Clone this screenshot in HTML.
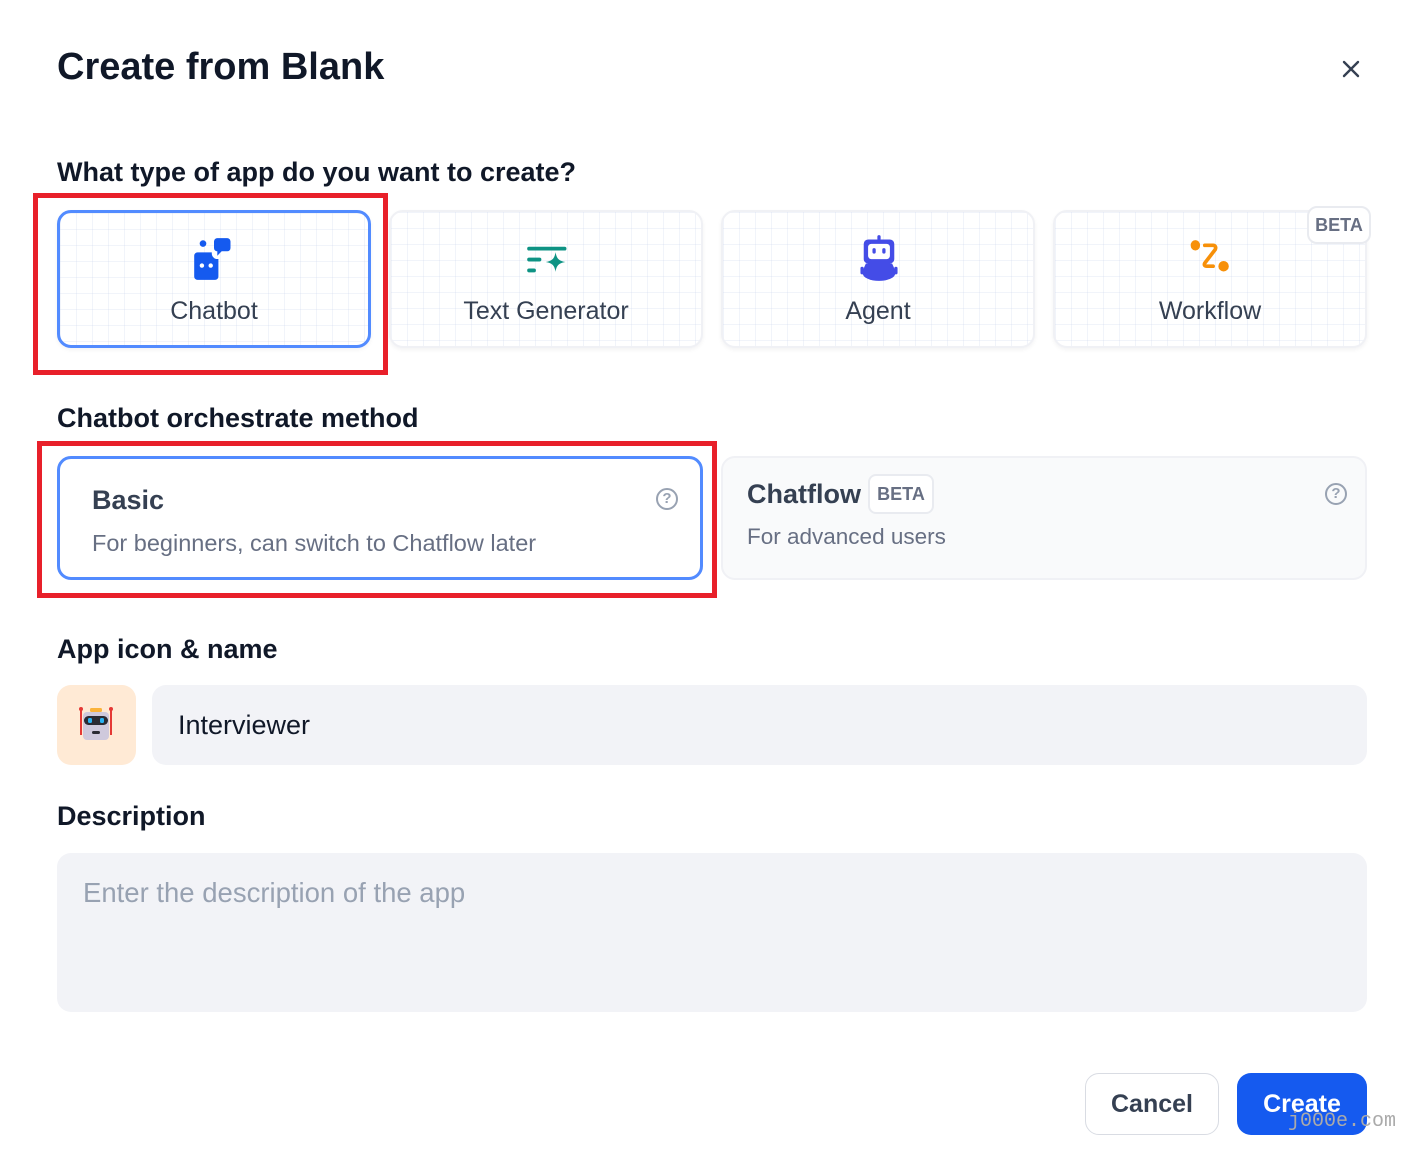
<!DOCTYPE html>
<html><head><meta charset="utf-8"><style>
*{box-sizing:border-box;margin:0;padding:0}
body{width:1415px;height:1153px;background:#fff;font-family:"Liberation Sans","Noto Sans CJK SC",sans-serif;position:relative;overflow:hidden;color:#101828}
.a{position:absolute}
h1{position:absolute;left:57px;top:46px;font-size:38px;font-weight:600;color:#101828}
.lbl{position:absolute;left:57px;font-size:27px;font-weight:600;color:#101828}
.card{position:absolute;top:210px;width:314px;height:138px;border-radius:14px;border:2px solid #f0f1f5;box-shadow:0 2px 4px rgba(16,24,40,.05);
background-color:#fff;background-image:linear-gradient(rgba(200,210,235,.25) 1px,transparent 1px),linear-gradient(90deg,rgba(200,210,235,.25) 1px,transparent 1px);background-size:16px 16px}
.card .t{position:absolute;left:0;right:0;top:85px;text-align:center;font-size:25px;color:#354052}
.card svg{position:absolute;left:135px;top:26px}
.red{position:absolute;border:5px solid #e8202a}
.beta{border:2px solid #e9ebf0;border-radius:8px;background:#fff;color:#676f83;font-weight:600;font-size:18px;text-align:center}
.q{position:absolute;width:22px;height:22px;border:2px solid #98a2b2;border-radius:50%;color:#98a2b2;font-size:15px;text-align:center;line-height:18px;font-weight:600}
</style></head><body>
<h1>Create from Blank</h1>
<svg class="a" style="left:1341px;top:59px" width="20" height="20" viewBox="0 0 20 20"><path d="M3 3L17 17M17 3L3 17" stroke="#354052" stroke-width="2.4" stroke-linecap="round"/></svg>

<div class="lbl" style="top:157px">What type of app do you want to create?</div>

<div class="card" style="left:57px;border-color:#528bff;border-width:3px">
<svg width="44" height="44" viewBox="0 0 40 40" style="left:132px;top:24px"><circle cx="10" cy="6" r="3" fill="#155aef"/><path d="M20 1h12a3 3 0 0 1 3 3v6a3 3 0 0 1-3 3h-5l-4 4v-4a3 3 0 0 1-3-3V4a3 3 0 0 1 3-3z" fill="#155aef"/><path d="M5 14h13v1a5 5 0 0 0 4 5l2 0v16a3 3 0 0 1-3 3H5a3 3 0 0 1-3-3V17a3 3 0 0 1 3-3z" fill="#155aef"/><circle cx="9" cy="26" r="2" fill="#fff"/><circle cx="17" cy="26" r="2" fill="#fff"/></svg>
<div class="t" style="top:84px">Chatbot</div></div>
<div class="card" style="left:389px">
<svg width="48" height="44" viewBox="0 0 44 40" style="left:134px;top:28px"><rect x="2" y="6" width="36" height="3.5" rx="1.7" fill="#0e9384"/><rect x="2" y="16" width="13" height="3.5" rx="1.7" fill="#0e9384"/><rect x="2" y="26" width="8" height="3.5" rx="1.7" fill="#0e9384"/><path d="M28 11c1 6 3 8 9 9-6 1-8 3-9 9-1-6-3-8-9-9 6-1 8-3 9-9z" fill="#0e9384"/></svg>
<div class="t">Text Generator</div></div>
<div class="card" style="left:721px">
<svg width="44" height="48" viewBox="0 0 40 44" style="left:134px;top:22px"><rect x="18.5" y="1" width="3" height="5" rx="1.5" fill="#444ce7"/><rect x="6" y="5" width="28" height="22" rx="4" fill="#444ce7"/><rect x="10" y="9" width="20" height="14" rx="3" fill="#fff"/><rect x="14" y="13" width="3" height="5" rx="1.5" fill="#444ce7"/><rect x="23" y="13" width="3" height="5" rx="1.5" fill="#444ce7"/><path d="M8 27h24c2 4 3 7 3 9a15 7 0 0 1-30 0c0-2 1-5 3-9z" fill="#444ce7"/><rect x="3" y="30" width="3" height="7" rx="1.5" fill="#444ce7"/><rect x="34" y="30" width="3" height="7" rx="1.5" fill="#444ce7"/></svg>
<div class="t">Agent</div></div>
<div class="card" style="left:1053px">
<svg width="46" height="44" viewBox="0 0 44 42" style="left:132px;top:27px"><ellipse cx="8" cy="6" rx="4.5" ry="5" fill="#f79009"/><path d="M17 6h8c2 0 3 2 2 4l-10 13c-1 2 0 3 2 3h6" stroke="#f79009" stroke-width="3.5" fill="none" stroke-linecap="round" stroke-linejoin="round"/><ellipse cx="35" cy="26" rx="5" ry="5" fill="#f79009"/></svg>
<div class="t">Workflow</div></div>
<div class="beta a" style="left:1307px;top:206px;width:64px;height:38px;line-height:34px;border-radius:10px">BETA</div>
<div class="red" style="left:33px;top:193px;width:355px;height:182px"></div>

<div class="lbl" style="top:403px">Chatbot orchestrate method</div>
<div class="a" style="left:57px;top:456px;width:646px;height:124px;border:3px solid #528bff;border-radius:14px;background:#fff">
<div class="a" style="left:32px;top:26px;font-size:27px;font-weight:600;color:#354052">Basic</div>
<div class="a" style="left:32px;top:71px;font-size:23.5px;color:#676f83">For beginners, can switch to Chatflow later</div>
<div class="q" style="left:596px;top:29px">?</div></div>
<div class="red" style="left:37px;top:441px;width:680px;height:157px"></div>
<div class="a" style="left:721px;top:456px;width:646px;height:124px;border:2px solid #f0f1f5;border-radius:14px;background:#f9fafb">
<div class="a" style="left:24px;top:21px;font-size:27px;font-weight:600;color:#354052">Chatflow</div>
<div class="beta a" style="left:145px;top:16px;width:66px;height:40px;line-height:36px">BETA</div>
<div class="q" style="left:602px;top:25px">?</div>
<div class="a" style="left:24px;top:66px;font-size:22.5px;color:#676f83">For advanced users</div></div>

<div class="lbl" style="top:634px">App icon &amp; name</div>
<div class="a" style="left:57px;top:685px;width:79px;height:80px;border-radius:14px;background:#ffead5">
<svg width="40" height="40" viewBox="0 0 40 40" style="position:absolute;left:19px;top:20px"><rect x="14" y="3" width="12" height="4" rx="1.5" fill="#fbb33a"/><line x1="5" y1="5" x2="5" y2="30" stroke="#e53935" stroke-width="2"/><line x1="35" y1="5" x2="35" y2="30" stroke="#e53935" stroke-width="2"/><circle cx="5" cy="4" r="2" fill="#e53935"/><circle cx="35" cy="4" r="2" fill="#e53935"/><rect x="7" y="7" width="26" height="28" rx="4" fill="#cfc9dc"/><rect x="8" y="11" width="24" height="9" rx="4.5" fill="#2b2b33"/><rect x="12" y="13" width="4" height="5" rx="1.5" fill="#2ab2f2"/><rect x="24" y="13" width="4" height="5" rx="1.5" fill="#2ab2f2"/><rect x="16" y="26" width="8" height="3" rx="1.5" fill="#2b2b33"/></svg></div>
<div class="a" style="left:152px;top:685px;width:1215px;height:80px;border-radius:14px;background:#f2f3f7;font-size:27px;color:#101828;padding:25px 26px">Interviewer</div>

<div class="lbl" style="top:801px">Description</div>
<div class="a" style="left:57px;top:853px;width:1310px;height:159px;border-radius:14px;background:#f2f3f7;font-size:27.5px;color:#98a2b2;padding:24px 26px">Enter the description of the app</div>

<div class="a" style="left:1085px;top:1073px;width:134px;height:62px;border:1.5px solid #d9dce3;border-radius:14px;background:#fff;font-size:25px;font-weight:600;color:#354052;text-align:center;line-height:60px">Cancel</div>
<div class="a" style="left:1237px;top:1073px;width:130px;height:62px;border-radius:14px;background:#155aef;font-size:25px;font-weight:600;color:#fff;text-align:center;line-height:62px">Create</div>
<div class="a" style="left:1288px;top:1110px;font-family:'Liberation Mono',monospace;font-size:20px;color:#aaa">j000e.com</div>
</body></html>
